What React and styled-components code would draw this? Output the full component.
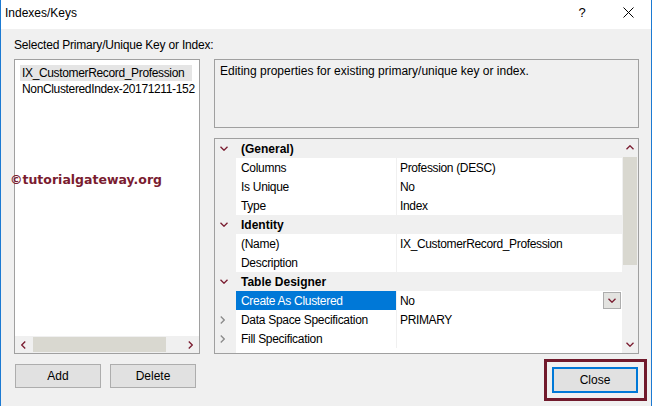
import React from 'react';
import styled, { createGlobalStyle } from 'styled-components';

const GlobalStyle = createGlobalStyle`
  html, body { margin: 0; padding: 0; background: #fff; }
  body { font-family: "Liberation Sans", Arial, sans-serif; font-size: 12px; color: #000; }
  * { box-sizing: border-box; }
`;

const MAROON = '#7a1c30';

const Window = styled.div`
  position: relative;
  width: 652px;
  height: 406px;
  background: #f0f0f0;
  border-left: 1px solid #1c7ad2;
  border-right: 1px solid #1c7ad2;
  display: flex;
  flex-direction: column;
  overflow: hidden;
`;

const TitleBar = styled.div`
  height: 29px;
  flex: none;
  background: #fff;
  display: flex;
  align-items: center;
  padding-left: 4px;
`;

const Title = styled.div`
  flex: 1;
  line-height: 16px;
  margin-top: -3px;
`;

const TitleButton = styled.div`
  width: 46px;
  height: 29px;
  display: flex;
  align-items: center;
  justify-content: center;
  font-size: 13px;
  padding-bottom: 4px;
`;

const Body = styled.div`
  flex: 1;
  display: flex;
  flex-direction: column;
  padding: 0 12px 0 13px;
`;

const Label = styled.div`
  margin-top: 8px;
  line-height: 16px;
  height: 16px;
  letter-spacing: -0.2px;
`;

const Main = styled.div`
  display: flex;
  gap: 14px;
  margin-top: 6px;
  height: 295px;
`;

const ListBox = styled.div`
  width: 186px;
  height: 295px;
  border: 1px solid #a0a0a0;
  background: #fff;
  display: flex;
  flex-direction: column;
`;

const ListItems = styled.div`
  flex: 1;
  padding: 5px 0 0 5px;
  overflow: hidden;
`;

const ListItem = styled.div`
  height: 16px;
  line-height: 16px;
  padding-left: 2px;
  white-space: nowrap;
  letter-spacing: -0.35px;
  width: ${p => (p.$selected ? '172px' : 'auto')};
  background: ${p => (p.$selected ? '#e5e5e5' : 'transparent')};
`;

const HScroll = styled.div`
  height: 17px;
  flex: none;
  display: flex;
  align-items: center;
  background: #f0f0f0;
`;

const ArrowBox = styled.div`
  width: ${p => p.$w || 17}px;
  height: ${p => p.$h || 17}px;
  flex: none;
  display: flex;
  align-items: center;
  justify-content: center;
`;

const HThumb = styled.div`
  margin-left: 1px;
  width: 133px;
  height: 15px;
  background: #d9d8d0;
`;

const Spacer = styled.div`
  flex: 1;
`;

const RightCol = styled.div`
  width: 425px;
  display: flex;
  flex-direction: column;
`;

const DescBox = styled.div`
  height: 69px;
  border: 1px solid #a0a0a0;
  background: #f0f0f0;
  padding: 3px 5px;
  line-height: 16px;
`;

const Grid = styled.div`
  margin-top: 10px;
  height: 216px;
  border: 1px solid #a0a0a0;
  background: #fff;
  display: flex;
`;

const Rows = styled.div`
  flex: 1;
  background: linear-gradient(to right, #f0f0f0 21px, #fff 21px);
`;

const Row = styled.div`
  display: grid;
  grid-template-columns: 21px 160px 1fr;
  height: 19px;
  background: ${p => (p.$category ? '#f0f0f0' : 'transparent')};
`;

const Gutter = styled.div`
  display: flex;
  align-items: center;
  padding-left: 5px;
`;

const NameCell = styled.div`
  display: flex;
  align-items: center;
  padding-left: 5px;
  white-space: nowrap;
  grid-column: ${p => (p.$span ? 'span 2' : 'auto')};
  font-weight: ${p => (p.$bold ? 'bold' : 'normal')};
  letter-spacing: ${p => (p.$bold ? '0' : '-0.3px')};
  background: ${p => (p.$selected ? '#0078d7' : 'transparent')};
  color: ${p => (p.$selected ? '#fff' : '#000')};
`;

const ValueCell = styled.div`
  display: flex;
  align-items: center;
  justify-content: space-between;
  padding-left: 3px;
  border-left: 1px solid #f0f0f0;
  white-space: nowrap;
  letter-spacing: -0.35px;
`;

const DropButton = styled.div`
  width: 18px;
  height: 17px;
  margin-right: 1px;
  border: 1px solid #adadad;
  background: #e3e3e0;
  display: flex;
  align-items: center;
  justify-content: center;
`;

const VScroll = styled.div`
  width: 16px;
  background: #f0f0f0;
  display: flex;
  flex-direction: column;
  align-items: center;
`;

const VThumb = styled.div`
  margin-top: 1px;
  width: 14px;
  height: 108px;
  background: #d9d8d0;
`;

const BottomRow = styled.div`
  display: flex;
  justify-content: space-between;
  align-items: flex-start;
`;

const LeftButtons = styled.div`
  display: flex;
  gap: 9px;
  margin-top: 10px;
  padding-left: 1px;
`;

const Button = styled.div`
  width: 86px;
  height: 24px;
  border: 1px solid #adadad;
  background: #e1e1e1;
  display: flex;
  align-items: center;
  justify-content: center;
`;

const CloseWrap = styled.div`
  position: relative;
  margin-top: 13px;
  margin-right: 1px;
`;

const CloseButton = styled.div`
  width: 86px;
  height: 26px;
  border: 2px solid #0078d7;
  background: #e1e1e1;
  display: flex;
  align-items: center;
  justify-content: center;
`;

const Annotation = styled.div`
  position: absolute;
  top: -8px;
  left: -8px;
  right: -9px;
  bottom: -8px;
  border: 3px solid #711a2c;
  pointer-events: none;
`;

const Watermark = styled.div`
  position: absolute;
  left: 9px;
  top: 171px;
  font-family: "DejaVu Sans", Verdana, sans-serif;
  font-weight: bold;
  font-size: 12.5px;
  line-height: 17px;
  color: ${MAROON};
  white-space: nowrap;
`;

const Chevron = ({ dir = 'down', color = MAROON }) => {
  const pts = {
    down: '0.5,0.5 4,4 7.5,0.5',
    up: '0.5,4 4,0.5 7.5,4',
    right: '0.5,0.5 4,4 0.5,7.5',
    left: '4,0.5 0.5,4 4,7.5',
  }[dir];
  const horiz = dir === 'down' || dir === 'up';
  return (
    <svg width={horiz ? 8 : 5} height={horiz ? 5 : 8} viewBox={horiz ? '0 0 8 4.5' : '0 0 4.5 8'}>
      <polyline points={pts} fill="none" stroke={color} strokeWidth="1.3" />
    </svg>
  );
};

const CloseIcon = () => (
  <svg width="11" height="11" viewBox="0 0 11 11">
    <path d="M0.5 0.5 L10.5 10.5 M10.5 0.5 L0.5 10.5" stroke="#000" strokeWidth="1" />
  </svg>
);

const rows = [
  { cat: true, name: '(General)' },
  { name: 'Columns', value: 'Profession (DESC)' },
  { name: 'Is Unique', value: 'No' },
  { name: 'Type', value: 'Index' },
  { cat: true, name: 'Identity' },
  { name: '(Name)', value: 'IX_CustomerRecord_Profession' },
  { name: 'Description', value: '' },
  { cat: true, name: 'Table Designer' },
  { name: 'Create As Clustered', value: 'No', selected: true, drop: true },
  { name: 'Data Space Specification', value: 'PRIMARY', collapsed: true },
  { name: 'Fill Specification', value: '', collapsed: true },
];

export default function App() {
  return (
    <>
      <GlobalStyle />
      <Window>
        <TitleBar>
          <Title>Indexes/Keys</Title>
          <TitleButton>?</TitleButton>
          <TitleButton><CloseIcon /></TitleButton>
        </TitleBar>
        <Body>
          <Label>Selected Primary/Unique Key or Index:</Label>
          <Main>
            <ListBox>
              <ListItems>
                <ListItem $selected>IX_CustomerRecord_Profession</ListItem>
                <ListItem>NonClusteredIndex-20171211-152</ListItem>
              </ListItems>
              <HScroll>
                <ArrowBox><Chevron dir="left" /></ArrowBox>
                <HThumb />
                <Spacer />
                <ArrowBox><Chevron dir="right" /></ArrowBox>
              </HScroll>
            </ListBox>
            <RightCol>
              <DescBox>Editing properties for existing primary/unique key or index.</DescBox>
              <Grid>
                <Rows>
                  {rows.map((r, i) => (
                    <Row key={i} $category={r.cat}>
                      <Gutter>
                        {r.cat && <Chevron dir="down" />}
                        {r.collapsed && <Chevron dir="right" color="#8a8a8a" />}
                      </Gutter>
                      {r.cat ? (
                        <NameCell $span $bold>{r.name}</NameCell>
                      ) : (
                        <>
                          <NameCell $selected={r.selected}>{r.name}</NameCell>
                          <ValueCell>
                            <span>{r.value}</span>
                            {r.drop && (
                              <DropButton><Chevron dir="down" /></DropButton>
                            )}
                          </ValueCell>
                        </>
                      )}
                    </Row>
                  ))}
                </Rows>
                <VScroll>
                  <ArrowBox $w={16}><Chevron dir="up" /></ArrowBox>
                  <VThumb />
                  <Spacer />
                  <ArrowBox $w={16}><Chevron dir="down" /></ArrowBox>
                </VScroll>
              </Grid>
            </RightCol>
          </Main>
          <BottomRow>
            <LeftButtons>
              <Button>Add</Button>
              <Button>Delete</Button>
            </LeftButtons>
            <CloseWrap>
              <CloseButton>Close</CloseButton>
              <Annotation />
            </CloseWrap>
          </BottomRow>
        </Body>
        <Watermark>©tutorialgateway.org</Watermark>
      </Window>
    </>
  );
}
